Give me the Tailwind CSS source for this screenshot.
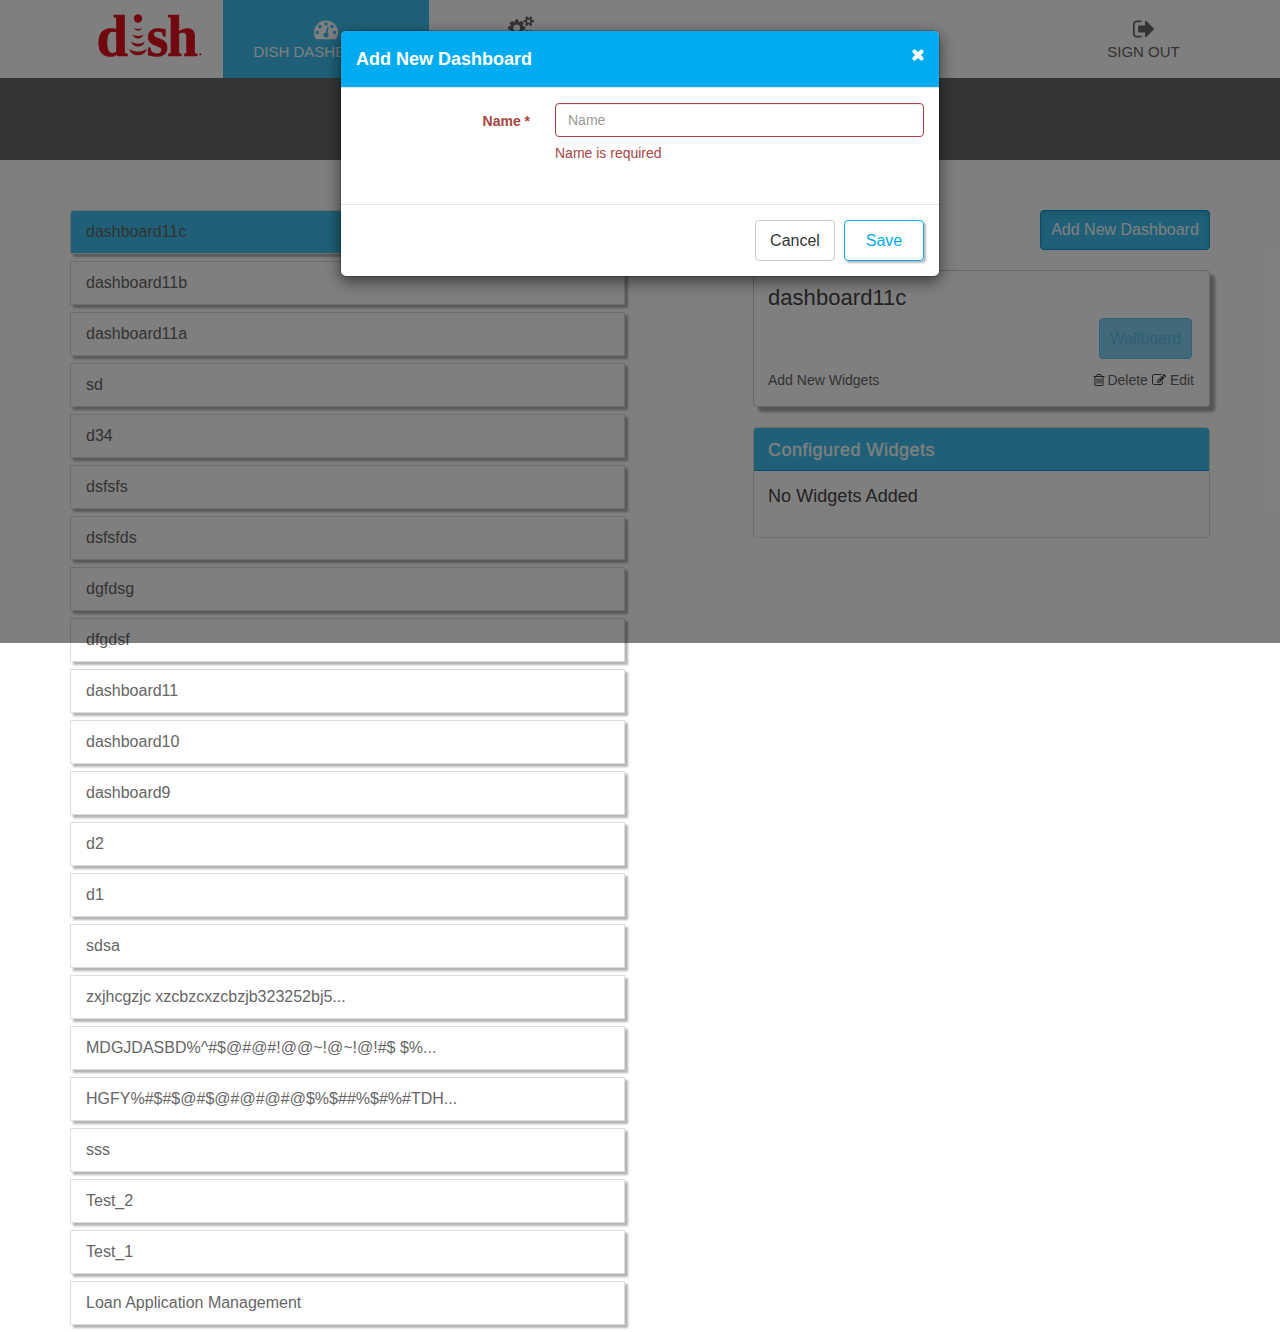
<!DOCTYPE html>
<html lang="en">
<head>
<meta charset="utf-8">
<title>Dish Dashboard</title>
<script src="https://cdn.jsdelivr.net/npm/@tailwindcss/browser@4"></script>
</head>
<body class="relative h-[1332px] overflow-hidden bg-white font-['Liberation_Sans',Arial,sans-serif] text-base text-[#666]">
<header class="flex h-[78px]">
  <div class="w-[223px] shrink-0 pl-[90px]">
    <svg class="block h-[78px] w-[120px] overflow-visible" viewBox="90 0 120 78" fill="#e21021" font-family="'Liberation Serif',serif" font-weight="bold" font-size="60">
      <g stroke="#e21021" stroke-width="0.7">
        <text x="96.500" y="55.500" textLength="31.500" lengthAdjust="spacingAndGlyphs">d</text>
        <text x="146.500" y="55.500" textLength="22" lengthAdjust="spacingAndGlyphs">s</text>
        <text x="167" y="55.500" textLength="31" lengthAdjust="spacingAndGlyphs">h</text>
      </g>
      <circle cx="138" cy="18.500" r="4.200"/>
      <path d="M134 28q4 2.200 8 0q-1.300 2.800-4 2.800t-4-2.800zM132.500 34.500q5.500 3 11 0q-1.800 4-5.500 4t-5.500-4zM131 41.500q7 4.600 14 0q-2 5-7 5t-7-5zM129 49q9 5.500 18 0q-2.500 6.300-9 6.300t-9-6.300z"/>
      <circle cx="200.300" cy="54.300" r="1.100"/>
    </svg>
  </div>
  <nav class="flex flex-1 text-center text-[15px]">
    <a class="flex w-[206px] flex-col items-center bg-[#3ec0f0] pt-[17px] text-white">
      <svg class="size-6" viewBox="0 0 1792 1792" fill="currentColor"><path d="M384 1152q0-53-37.500-90.500t-90.500-37.500-90.500 37.500-37.500 90.500 37.500 90.500 90.500 37.500 90.500-37.500 37.500-90.500zm192-448q0-53-37.500-90.500t-90.500-37.500-90.500 37.500-37.500 90.500 37.500 90.500 90.500 37.500 90.500-37.500 37.500-90.500zm428 481l101-382q6-26-7.500-48.500t-38.500-29.500-48 6.500-30 39.500l-101 382q-60 5-107 43.500t-63 98.500q-20 77 20 146t117 89 146-20 89-117q16-60-6-117t-72-91zm660-33q0-53-37.500-90.500t-90.500-37.500-90.500 37.500-37.500 90.500 37.500 90.500 90.500 37.500 90.500-37.500 37.500-90.500zm-640-640q0-53-37.500-90.500t-90.500-37.500-90.500 37.500-37.500 90.500 37.500 90.500 90.500 37.500 90.500-37.500 37.500-90.500zm448 192q0-53-37.500-90.500t-90.500-37.500-90.500 37.500-37.500 90.500 37.500 90.500 90.500 37.500 90.500-37.500 37.500-90.500zm320 448q0 261-141 483-19 29-54 29h-1402q-35 0-54-29-141-221-141-483 0-182 71-348t191-286 286-191 348-71 348 71 286 191 191 286 71 348z"/></svg>
      <span class="whitespace-nowrap leading-[22px]">DISH DASHBOARDS</span>
    </a>
    <a class="flex w-[184px] flex-col items-center pt-4">
      <svg class="h-6 w-[26px]" viewBox="0 0 1920 1792" fill="currentColor"><path d="M896 896q0-106-75-181t-181-75-181 75-75 181 75 181 181 75 181-75 75-181zm768 512q0-52-38-90t-90-38-90 38-38 90q0 53 37.500 90.500t90.500 37.500 90.500-37.500 37.500-90.500zm0-1024q0-52-38-90t-90-38-90 38-38 90q0 53 37.500 90.500t90.500 37.500 90.500-37.500 37.500-90.500zm-384 421v185q0 10-7 19.500t-16 10.500l-155 24q-11 35-32 76 34 48 90 115 7 11 7 20 0 12-7 19-23 30-82.500 89.500t-78.500 59.500q-11 0-21-7l-115-90q-37 19-77 31-11 108-23 155-7 24-30 24h-186q-11 0-20-7.500t-10-17.500l-23-153q-34-10-75-31l-118 89q-7 7-20 7-11 0-21-8-144-133-144-160 0-9 7-19 10-14 41-53t47-61q-23-44-35-82l-152-24q-10-1-17-9.500t-7-19.500v-185q0-10 7-19.500t16-10.500l155-24q11-35 32-76-34-48-90-115-7-11-7-20 0-12 7-20 22-30 82-89t79-59q11 0 21 7l115 90q34-18 77-32 11-108 23-154 7-24 30-24h186q11 0 20 7.500t10 17.500l23 153q34 10 75 31l118-89q8-7 20-7 11 0 21 8 144 133 144 160 0 8-7 19-12 16-42 54t-45 60q23 48 34 82l152 23q10 2 17 10.500t7 19.500zm640 533v140q0 16-149 31-12 27-30 52 51 113 51 138 0 4-4 7-122 71-124 71-8 0-46-47t-52-68q-20 2-30 2t-30-2q-14 21-52 68t-46 47q-2 0-124-71-4-3-4-7 0-25 51-138-18-25-30-52-149-15-149-31v-140q0-16 149-31 13-29 30-52-51-113-51-138 0-4 4-7 4-2 35-20t59-34 30-16q8 0 46 46.500t52 67.500q20-2 30-2t30 2q51-71 92-112l6-2q4 0 124 70 4 3 4 7 0 25-51 138 17 23 30 52 149 15 149 31zm0-1024v140q0 16-149 31-12 27-30 52 51 113 51 138 0 4-4 7-122 71-124 71-8 0-46-47t-52-68q-20 2-30 2t-30-2q-14 21-52 68t-46 47q-2 0-124-71-4-3-4-7 0-25 51-138-18-25-30-52-149-15-149-31v-140q0-16 149-31 13-29 30-52-51-113-51-138 0-4 4-7 4-2 35-20t59-34 30-16q8 0 46 46.500t52 67.500q20-2 30-2t30 2q51-71 92-112l6-2q4 0 124 70 4 3 4 7 0 25-51 138 17 23 30 52 149 15 149 31z"/></svg>
    </a>
    <a class="mr-[70px] ml-auto flex w-[133px] flex-col items-center pt-[17px]">
      <svg class="h-6 w-[22px]" viewBox="0 0 1643 1792" fill="currentColor"><path d="M640 1440q0 4 1 20t.5 26.500-3 23.500-10 19.500-20.500 6.500h-320q-119 0-203.500-84.500t-84.500-203.500v-704q0-119 84.500-203.500t203.500-84.500h320q13 0 22.500 9.500t9.500 22.500q0 4 1 20t.5 26.500-3 23.500-10 19.500-20.500 6.500h-320q-66 0-113 47t-47 113v704q0 66 47 113t113 47h312l11.500 1 11.500 3 8 5.500 7 9 2 13.500zm928-544q0 26-19 45l-544 544q-19 19-45 19t-45-19-19-45v-288h-448q-26 0-45-19t-19-45v-384q0-26 19-45t45-19h448v-288q0-26 19-45t45-19 45 19l544 544q19 19 19 45z"/></svg>
      <span class="leading-[22px]">SIGN OUT</span>
    </a>
  </nav>
</header>
<div class="h-[82px] bg-[#6b6b6b]"></div>

<main class="flex pt-[50px] pl-[70px]">
  <ul id="dashboards" class="flex w-[555px] flex-col gap-[7px]"></ul>
  <section class="ml-[128px] w-[457px]">
    <div class="flex justify-end">
      <button class="h-10 w-[170px] rounded border border-[#009bd6] bg-[#3ec0f0] text-white shadow-[inset_0_3px_5px_rgba(0,0,0,0.125)]">Add New Dashboard</button>
    </div>
    <div class="mt-5 h-[137px] rounded border border-[#ccc] px-[14px] pt-[11px] shadow-[5px_5px_3px_#aaa]">
      <h2 class="text-[22px] leading-8 tracking-[0.05px] text-[#444]">dashboard11c</h2>
      <div class="mt-1 flex justify-end pr-[3px]">
        <button class="h-[41px] w-[93px] rounded border border-[#5fc4ea] bg-[#84d3f3] text-[#58c0e6]">Wallboard</button>
      </div>
      <div class="mt-[11px] flex items-center pr-px text-sm">
        <span>Add New Widgets</span>
        <svg class="mr-[1px] ml-auto size-[14px] text-[#444]" viewBox="0 0 1792 1792" fill="currentColor"><path d="M704 736v576q0 14-9 23t-23 9h-64q-14 0-23-9t-9-23v-576q0-14 9-23t23-9h64q14 0 23 9t9 23zm256 0v576q0 14-9 23t-23 9h-64q-14 0-23-9t-9-23v-576q0-14 9-23t23-9h64q14 0 23 9t9 23zm256 0v576q0 14-9 23t-23 9h-64q-14 0-23-9t-9-23v-576q0-14 9-23t23-9h64q14 0 23 9t9 23zm128 724v-948h-896v948q0 22 7 40.500t14.500 27 10.500 8.500h832q3 0 10.500-8.500t14.500-27 7-40.500zm-672-1076h448l-48-117q-7-9-17-11h-317q-10 2-17 11zm928 32v64q0 14-9 23t-23 9h-96v948q0 83-47 143.500t-113 60.500h-832q-66 0-113-58.500t-47-141.500v-952h-96q-14 0-23-9t-9-23v-64q0-14 9-23t23-9h309l70-167q15-37 54-63t79-26h320q40 0 79 26t54 63l70 167h309q14 0 23 9t9 23z"/></svg>
        <span>Delete</span>
        <svg class="mr-1 ml-1 size-[14px] text-[#444]" viewBox="0 0 1792 1792" fill="currentColor"><path d="M888 1184l116-116-152-152-116 116v56h96v96h56zm440-720q-16-16-33 1l-350 350q-17 17-1 33t33-1l350-350q17-17 1-33zm80 594v190q0 119-84.500 203.500t-203.500 84.500h-832q-119 0-203.500-84.500t-84.500-203.500v-832q0-119 84.500-203.500t203.500-84.500h832q63 0 117 25 15 7 18 23 3 17-9 29l-49 49q-14 14-32 8-23-6-45-6h-832q-66 0-113 47t-47 113v832q0 66 47 113t113 47h832q66 0 113-47t47-113v-126q0-13 9-22l64-64q15-15 35-7t20 29zm-96-738l288 288-672 672h-288v-288zm444 132l-92 92-288-288 92-92q28-28 68-28t68 28l152 152q28 28 28 68t-28 68z"/></svg>
        <span>Edit</span>
      </div>
    </div>
    <div class="mt-5 h-[111px] rounded border border-[#ddd] text-lg">
      <h3 class="flex h-[43px] items-center rounded-t-[3px] border-b border-[#00a0dc] bg-[#3ec0f0] px-[14px] pt-[2px] tracking-[0.5px] text-white [-webkit-text-stroke:0.3px_white]">Configured Widgets</h3>
      <p class="px-[14px] pt-[11px] tracking-[0.05px] text-[#444]">No Widgets Added</p>
    </div>
  </section>
</main>

<div class="absolute inset-x-0 top-0 h-[643px] bg-black/50"></div>

<div class="absolute top-[30px] left-[340px] h-[247px] w-[600px] rounded-md border border-black/20 bg-white bg-clip-padding shadow-[0_5px_15px_rgba(0,0,0,0.5)]">
  <div class="flex h-[57px] justify-between rounded-t-[5px] border-b border-[#e5e5e5] bg-[#00acf1] px-[15px] pt-[14px] text-white">
    <h4 class="text-lg font-bold">Add New Dashboard</h4>
    <svg class="mt-1 h-3 w-3" viewBox="0 0 12 12" stroke="currentColor" stroke-width="4" stroke-linecap="round"><path d="M2.500 2.500l7 7M9.500 2.500l-7 7"/></svg>
  </div>
  <div class="flex h-[116px] px-[15px] pt-[15px] text-sm text-[#a94442]">
    <label class="mr-[25px] w-[174px] pt-2 text-right font-bold">Name *</label>
    <div>
      <input class="block h-[34px] w-[369px] rounded border border-[#a94442] px-3 text-sm shadow-[inset_0_1px_1px_rgba(0,0,0,0.075)] placeholder:text-[#999]" placeholder="Name">
      <p class="mt-[6px]">Name is required</p>
    </div>
  </div>
  <div class="flex justify-end gap-[9px] border-t border-[#e5e5e5] px-[15px] pt-[15px]">
    <button class="h-[41px] w-[80px] rounded border border-[#ccc] text-[#333]">Cancel</button>
    <button class="h-[41px] w-[80px] rounded border border-[#00acf1] text-[#00acf1] shadow-[2px_2px_2px_#bbb]">Save</button>
  </div>
</div>

<script>
const names = ['dashboard11c','dashboard11b','dashboard11a','sd','d34','dsfsfs','dsfsfds','dgfdsg','dfgdsf','dashboard11','dashboard10','dashboard9','d2','d1','sdsa','zxjhcgzjc xzcbzcxzcbzjb323252bj5...','MDGJDASBD%^#$@#@#!@@~!@~!@!#$ $%...','HGFY%#$#$@#$@#@#@#@$%$##%$#%#TDH...','sss','Test_2','Test_1','Loan Application Management'];
const list = document.getElementById('dashboards');
names.forEach((name, i) => {
  const li = document.createElement('li');
  li.className = 'h-[44px] border border-[#ddd] px-[15px] pt-[9px] shadow-[3px_3px_2px_#b5b5b5] ' + (i === 0 ? 'rounded-t bg-[#3ec0f0]' : 'bg-white');
  li.textContent = name;
  list.appendChild(li);
});
</script>
</body>
</html>
